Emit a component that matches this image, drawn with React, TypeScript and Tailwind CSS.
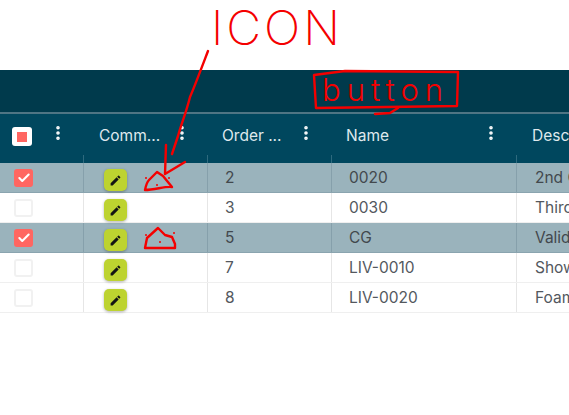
import React from 'react';
import { Check, EllipsisVertical } from 'lucide-react';

interface Row {
  order: string;
  name: string;
  desc: string;
  selected?: boolean;
}

const rows: Row[] = [
  { order: '2', name: '0020', desc: '2nd Coat', selected: true },
  { order: '3', name: '0030', desc: 'Third Coat' },
  { order: '5', name: 'CG', desc: 'Validation', selected: true },
  { order: '7', name: 'LIV-0010', desc: 'Show Room' },
  { order: '8', name: 'LIV-0020', desc: 'Foam Seal' },
];

function PencilIcon() {
  return (
    <svg viewBox="0 0 24 24" className="w-[13px] h-[13px] fill-[#141414]">
      <path d="M3 17.25V21h3.75L17.81 9.94l-3.75-3.75L3 17.25zM20.71 7.04a1 1 0 0 0 0-1.41l-2.34-2.34a1 1 0 0 0-1.41 0l-1.83 1.83 3.75 3.75 1.83-1.83z" />
    </svg>
  );
}

function Dots() {
  return <EllipsisVertical className="absolute right-[17px] top-[10px] w-[18px] h-[18px] text-white" strokeWidth={2.8} />;
}

function HeaderCell({ label, className }: { label: string; className: string }) {
  return (
    <div className={`relative h-full shrink-0 ${className}`}>
      <span className="block pt-[12px] text-[15.5px] leading-5 text-[#dfe9ed] whitespace-nowrap">{label}</span>
      <Dots />
      <div className="absolute right-0 bottom-0 w-px h-[8px] bg-[#2e6a7e]" />
    </div>
  );
}

// red marker scribbles lying over the grid
function Scribbles() {
  return (
    <svg viewBox="0 0 569 415" className="absolute inset-0 w-[569px] h-[415px] pointer-events-none" fill="none" stroke="#f40000" strokeWidth="2.4" strokeLinecap="round" strokeLinejoin="round">
      <path d="M208 51 C200 72 194 88 190 97 C186 113 182 122 178 136 L172 154" />
      <path d="M166 145 L165 174 L185 162" />
      <path d="M145 190 C146 185 147 182 149 180 L157 172 L163 176 L172 187 C165 186 155 190 145 190 Z" />
      <path d="M145 248 L147 238 L158 228 L165 235 L172 237 L175 244 L175 248 Z" />
      <path d="M314 75 L345 71 L458 72 L457 106 L316 108 Z" />
      <path d="M375 114 L390 113 L398 108" />
      <g fill="#f40000" stroke="none">
        <circle cx="146" cy="178" r="1" /><circle cx="157" cy="185" r="1" /><circle cx="169" cy="178" r="1" />
        <circle cx="146" cy="235" r="1" /><circle cx="160" cy="242" r="1" /><circle cx="174" cy="233" r="1" />
      </g>
    </svg>
  );
}

export default function App() {
  return (
    <div className="relative w-[569px] h-[415px] overflow-hidden bg-white font-['Inter','Open_Sans',sans-serif]">
      <div className="h-[70px]" />
      <div className="h-[44px] bg-[#003a4c] border-b-2 border-[#4f7584]" />

      <div className="flex h-[49px] w-[700px] bg-[#00475e]">
        <div className="relative w-[84px] h-full shrink-0">
          <div className="absolute left-[12px] top-[13px] flex items-center justify-center w-[20px] h-[19px] bg-white rounded-[3px]">
            <div className="w-[10px] h-[10px] bg-[#ff6661]" />
          </div>
          <Dots />
          <div className="absolute right-0 bottom-0 w-px h-[8px] bg-[#2e6a7e]" />
        </div>
        <HeaderCell label="Comm..." className="w-[124px] pl-[15px]" />
        <HeaderCell label="Order ..." className="w-[124px] pl-[14px]" />
        <HeaderCell label="Name" className="w-[185px] pl-[14px]" />
        <HeaderCell label="Description" className="w-[183px] pl-[15px]" />
      </div>

      <div className="w-[700px]">
        {rows.map((row) => {
          const line = row.selected ? 'border-[#86a0ab]' : 'border-[#e6e6e6]';
          const text = row.selected ? 'text-[#42484d]' : 'text-[#53585e]';
          return (
            <div key={row.order} className={`flex h-[30px] border-b ${row.selected ? 'bg-[#9ab3bc] border-[#8aa4af]' : 'bg-white border-[#efefef]'}`}>
              <div className={`relative w-[84px] shrink-0 border-r ${line}`}>
                {row.selected ? (
                  <div className="absolute left-[14px] top-[6px] flex items-center justify-center w-[19px] h-[18px] bg-[#ff6661] rounded-[3px]">
                    <Check className="w-[14px] h-[14px] text-white" strokeWidth={3.5} />
                  </div>
                ) : (
                  <div className="absolute left-[14px] top-[6px] w-[19px] h-[18px] bg-white border-2 border-[#f1f1f1] rounded-[3px]" />
                )}
              </div>
              <div className={`relative w-[124px] shrink-0 border-r ${line}`}>
                <div className="absolute left-[20px] top-[6px] flex items-center justify-center w-[23px] h-[22px] bg-[#bdd330] rounded-[5px] shadow-[0_1px_3px_rgba(0,0,0,0.3)]">
                  <PencilIcon />
                </div>
              </div>
              <div className={`w-[124px] shrink-0 pl-[17px] border-r text-[15.5px] leading-[29px] ${text} ${line}`}>
                {row.order}
              </div>
              <div className={`w-[185px] shrink-0 pl-[17px] border-r text-[15.5px] leading-[29px] ${text} ${line}`}>
                {row.name}
              </div>
              <div className={`w-[183px] shrink-0 pl-[18px] text-[15.5px] leading-[29px] whitespace-nowrap ${text}`}>{row.desc}</div>
            </div>
          );
        })}
      </div>

      <span className="absolute left-[211px] top-[-2px] text-[48px] leading-[60px] tracking-[3px] font-extralight text-[#f40000]">ICON</span>
      <span className="absolute left-[322px] top-[72px] text-[31px] leading-[36px] tracking-[6px] font-light text-[#f40000]">button</span>
      <Scribbles />
    </div>
  );
}
